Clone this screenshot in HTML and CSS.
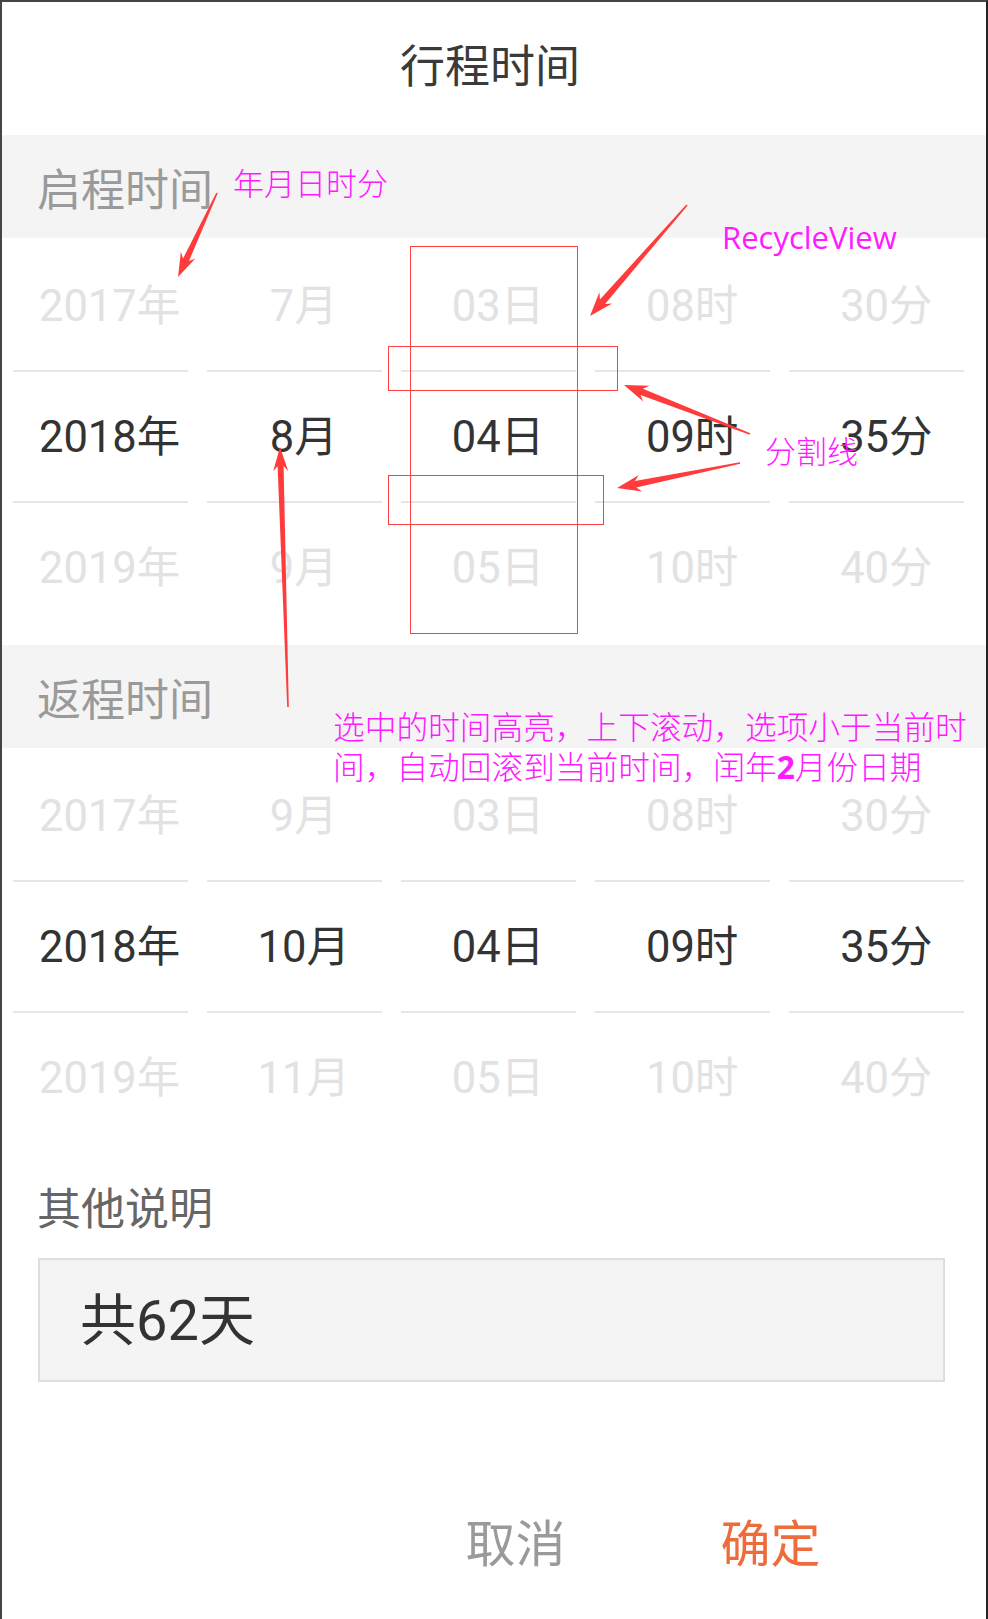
FILE: index.html
```html
<!DOCTYPE html>
<html lang="zh-CN">
<head>
<meta charset="utf-8">
<title>行程时间</title>
<link rel="stylesheet" href="styles.css">
</head>
<body>
<div class="screen">
  <div class="title">行程时间</div>

  <div class="section-head">启程时间</div>
  <div class="picker">
    <div class="col">
      <div class="item">2017年</div>
      <div class="item sel">2018年</div>
      <div class="item">2019年</div>
    </div>
    <div class="col">
      <div class="item">7月</div>
      <div class="item sel">8月</div>
      <div class="item">9月</div>
    </div>
    <div class="col">
      <div class="item">03日</div>
      <div class="item sel">04日</div>
      <div class="item">05日</div>
    </div>
    <div class="col">
      <div class="item">08时</div>
      <div class="item sel">09时</div>
      <div class="item">10时</div>
    </div>
    <div class="col">
      <div class="item">30分</div>
      <div class="item sel">35分</div>
      <div class="item">40分</div>
    </div>
  </div>

  <div class="section-head">返程时间</div>
  <div class="picker">
    <div class="col">
      <div class="item">2017年</div>
      <div class="item sel">2018年</div>
      <div class="item">2019年</div>
    </div>
    <div class="col">
      <div class="item">9月</div>
      <div class="item sel">10月</div>
      <div class="item">11月</div>
    </div>
    <div class="col">
      <div class="item">03日</div>
      <div class="item sel">04日</div>
      <div class="item">05日</div>
    </div>
    <div class="col">
      <div class="item">08时</div>
      <div class="item sel">09时</div>
      <div class="item">10时</div>
    </div>
    <div class="col">
      <div class="item">30分</div>
      <div class="item sel">35分</div>
      <div class="item">40分</div>
    </div>
  </div>

  <div class="label">其他说明</div>
  <div class="note-box">共62天</div>

  <div class="actions">
    <div class="btn cancel">取消</div>
    <div class="btn ok">确定</div>
  </div>
</div>

<div class="notes">
  <div class="box box-col"></div>
  <div class="box box-line1"></div>
  <div class="box box-line2"></div>

  <div class="tag tag-ymd">年月日时分</div>
  <div class="tag tag-rv">RecycleView</div>
  <div class="tag tag-div">分割线</div>
  <div class="tag tag-desc">选中的时间高亮，上下滚动，选项小于当前时<br>间，自动回滚到当前时间，闰年<b>2</b>月份日期</div>

  <svg class="arrows" width="988" height="1619" viewBox="0 0 988 1619">
    <g fill="#ff3b3b">
      <polygon transform="translate(217 193) rotate(114.9)" points="0,-0.8 73.6,-3.2 68.6,-8 92.6,0 68.6,8 73.6,3.2 0,0.8"/>
      <polygon transform="translate(687 205) rotate(131.15)" points="0,-0.8 128.4,-3.4 123.4,-8.5 147.4,0 123.4,8.5 128.4,3.4 0,0.8"/>
      <polygon transform="translate(750 434) rotate(-158.75)" points="0,-0.8 116.2,-3.4 111.2,-8.5 135.2,0 111.2,8.5 116.2,3.4 0,0.8"/>
      <polygon transform="translate(740 463) rotate(168.5)" points="0,-0.8 106.5,-3.4 101.5,-8.5 125.5,0 101.5,8.5 106.5,3.4 0,0.8"/>
      <polygon transform="translate(288 707) rotate(-91.76)" points="0,-0.8 241,-3 236,-7.5 260,0 236,7.5 241,3 0,0.8"/>
    </g>
  </svg>
</div>
</body>
</html>
```

FILE: styles.css
```css
html, body {
  margin: 0;
  padding: 0;
}

body {
  position: relative;
  width: 988px;
  height: 1619px;
  overflow: hidden;
  background: #fff;
  font-family: "Noto Sans CJK SC", sans-serif;
}

.screen {
  box-sizing: border-box;
  width: 988px;
  height: 1619px;
  border-left: 2px solid #444;
  border-top: 2px solid #444;
  border-right: 2px solid #222;
  background: #fff;
}

.title {
  box-sizing: border-box;
  height: 133px;
  padding: 0 8px 10px 0;
  display: flex;
  align-items: center;
  justify-content: center;
  font-size: 45px;
  color: #3a3a3a;
}

.section-head {
  box-sizing: border-box;
  height: 103px;
  padding-left: 35px;
  display: flex;
  align-items: center;
  background: #f4f4f4;
  font-size: 44px;
  color: #9a9a9a;
}

.picker {
  box-sizing: border-box;
  height: 407px;
  padding: 3px 0 13px 1px;
  display: grid;
  grid-template-columns: repeat(5, 194.2px);
}

.col {
  padding: 0 9.5px;
  display: flex;
  flex-direction: column;
}

.item {
  box-sizing: border-box;
  height: 129px;
  padding: 0 0 6px 19px;
  display: flex;
  align-items: center;
  justify-content: center;
  font-family: Roboto, "Noto Sans CJK SC", sans-serif;
  font-size: 43.5px;
  color: #e2e2e2;
  white-space: nowrap;
}

.item.sel {
  box-sizing: content-box;
  height: 123px;
  color: #333;
  border-top: 2px solid #e6e6e6;
  border-bottom: 2px solid #e6e6e6;
}

.label {
  margin-top: 21px;
  height: 60px;
  padding-left: 35px;
  display: flex;
  align-items: center;
  font-size: 44px;
  color: #666;
}

.note-box {
  box-sizing: border-box;
  margin: 22px 0 0 36px;
  width: 907px;
  height: 124px;
  padding: 0 0 9px 40px;
  display: flex;
  align-items: center;
  border: 2px solid #dedede;
  background: #f4f4f4;
  font-family: Roboto, "Noto Sans CJK SC", sans-serif;
  font-size: 56px;
  color: #333;
}

.actions {
  margin-top: 108px;
  padding-right: 88px;
  display: flex;
  justify-content: flex-end;
}

.btn {
  width: 255px;
  height: 100px;
  display: flex;
  align-items: center;
  justify-content: center;
  font-size: 50px;
}

.cancel {
  color: #9a9a9a;
}

.ok {
  color: #ee6c3c;
}

/* annotation layer */
.notes {
  position: absolute;
  left: 0;
  top: 0;
  width: 988px;
  height: 1619px;
  pointer-events: none;
}

.box {
  position: absolute;
  box-sizing: border-box;
  border: 1px solid #ff4040;
}

.box-col {
  left: 410px;
  top: 246px;
  width: 168px;
  height: 388px;
}

.box-line1 {
  left: 388px;
  top: 346px;
  width: 230px;
  height: 45px;
}

.box-line2 {
  left: 388px;
  top: 475px;
  width: 216px;
  height: 50px;
}

.tag {
  position: absolute;
  color: #ff1aff;
  font-size: 31px;
  line-height: 31px;
  font-weight: 300;
  white-space: nowrap;
}

.tag-ymd {
  left: 233px;
  top: 166px;
}

.tag-rv {
  left: 722px;
  top: 222px;
  font-family: "Open Sans", sans-serif;
  font-weight: 400;
}

.tag-div {
  left: 765px;
  top: 434px;
}

.tag-desc {
  left: 333px;
  top: 705px;
  font-size: 31.7px;
  line-height: 40px;
}

.tag-desc b {
  font-family: "Open Sans", sans-serif;
  font-weight: 700;
}

.arrows {
  position: absolute;
  left: 0;
  top: 0;
}
```
